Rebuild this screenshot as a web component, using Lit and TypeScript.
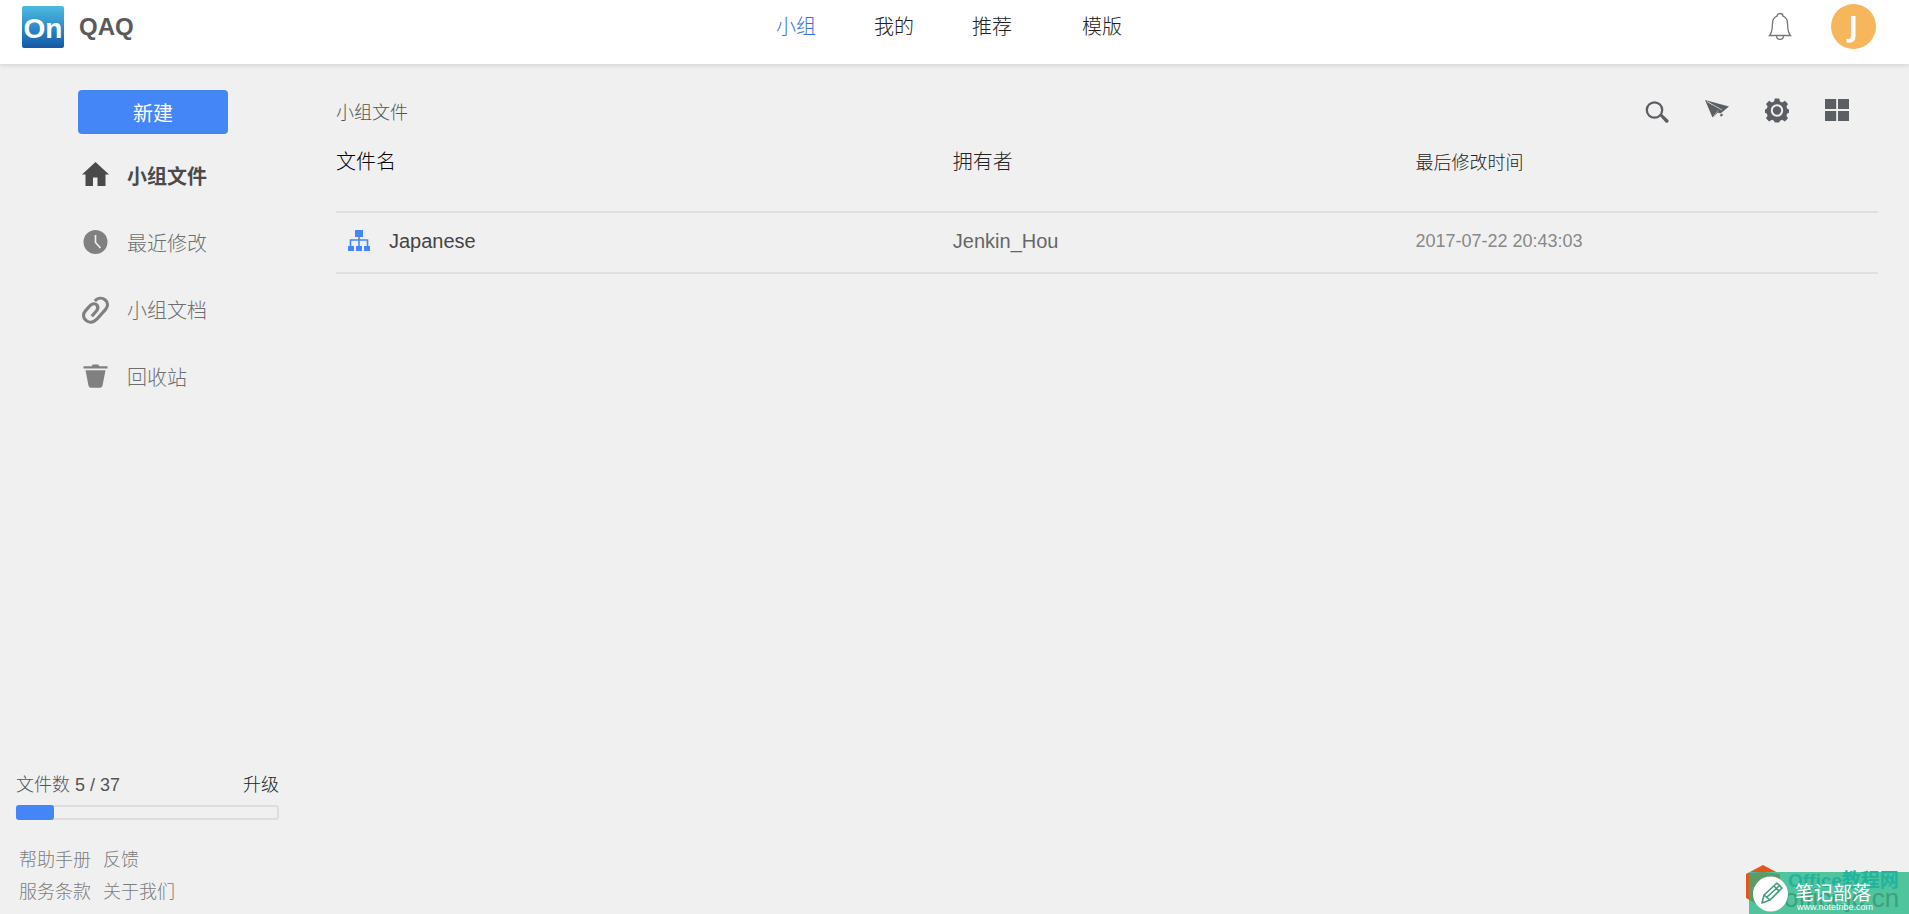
import { LitElement, html, css, svg, TemplateResult } from "lit";
import { customElement, property } from "lit/decorators.js";
import { classMap } from "lit/directives/class-map.js";

const sans = css`"Liberation Sans", "Noto Sans CJK SC", sans-serif`;

const icons: Record<string, TemplateResult> = {
  home: svg`<path d="M14.500 0 1 12.500h3.500V24H12v-8.500h4.500V24H24.500V12.500H28z"/>`,
  clock: svg`<circle cx="14.500" cy="13" r="12"/><path d="M14.500 6v7.500l5 5.500" fill="none" stroke="#f0f0f0" stroke-width="1.600"/>`,
  clip: svg`<path d="M13.800 5C16.500 2 20.800 1.200 24 3.800s3.200 6.400.6 9.600l-8.800 9.800c-3.300 3.500-7.800 3.800-10.800 1.200s-3.300-6.400-.4-9.800l4.800-5.300c2-2 5.200-2.200 6.800.2s.2 4.300-.8 5.500l-4.600 5.200" fill="none" stroke="currentColor" stroke-width="3.200"/>`,
  trash: svg`<path d="M2.500 3.300h8.200l1-1.800h5.600l1 1.800h8.200v2.200h-24zM4.500 7.300h20l-3 15.500q-.4 2-2.400 2H9.900q-2 0-2.400-2z"/>`,
  search: svg`<g transform="translate(0 1)"><circle cx="9.500" cy="10" r="7.700" fill="none" stroke="currentColor" stroke-width="2.300"/><path d="m14.500 15.500 2-2 6.800 6.600q.8 1-.2 2.200-1.200 1-2.400.2z"/></g>`,
  send: svg`<path d="M0 1 24 7.500 19.500 10 12.500 9zM0 1 13.500 10.500 7.500 18.500zM8 18.800 13.500 11 6 5.500 24 7.500 15.500 14.500 12.800 13.500zM14.800 16l2.400-1.600.8 1.600-2 1.800z"/><path d="M2 2.500 17 11" stroke="#f0f0f0" stroke-width=".7"/>`,
  gear: svg`<path fill-rule="evenodd" d="M9.800 0h4.400l.8 3 2.200.9 2.700-1.600 3.100 3.100-1.600 2.700.9 2.200 1.700.6v3.400l-1.700.6-.9 2.200 1.600 2.700-3.100 3.100-2.700-1.600-2.200.9-.8 1.800H9.800L9 22.200l-2.200-.9-2.700 1.600L1 19.800l1.600-2.700-.9-2.200-1.700-.6v-3.400l1.700-.6.9-2.200L1 5.400l3.100-3.100 2.700 1.600L9 3zM12 5.800a6.200 6.200 0 1 0 0 12.400 6.200 6.200 0 0 0 0-12.400z" transform="translate(0 -.5)"/><circle cx="12" cy="11.500" r="4.200"/>`,
  grid: svg`<path d="M0 0h11.200v10H0zM13 0h11v10H13zM0 12h11.200v10H0zM13 12h11v10H13z"/>`,
  bell: svg`<g fill="none" stroke="#777" stroke-width="1.300"><path d="M9 3.200c0-3.600 6-3.600 6 0 3.400 1.200 4.600 4.200 4.600 8 0 6 .6 8.500 2.900 11.300h-21c2.300-2.800 2.900-5.300 2.900-11.300 0-3.800 1.200-6.800 4.600-8z"/><path d="M8.500 22.500c0 5.200 7 5.200 7 0"/></g>`,
  tree: svg`<path d="M7 0h8v7H7zM0 16h6v5H0zM8 16h6v5H8zM16 16h6v5h-6z"/><path d="M11 6v10M2.500 16v-6h17v6" fill="none" stroke="currentColor" stroke-width="1.600"/>`,
};

@customElement("ui-icon")
class UiIcon extends LitElement {
  @property() name = "";
  @property() box = "0 0 24 24";
  static styles = css`
    :host { display: block; flex: none; }
    svg { display: block; width: 100%; height: 100%; fill: currentColor; overflow: visible; }
  `;
  render() {
    return html`<svg viewBox=${this.box} aria-hidden="true">${icons[this.name]}</svg>`;
  }
}

@customElement("top-bar")
class TopBar extends LitElement {
  static styles = css`
    :host { display: block; }
    header {
      display: grid; grid-template-columns: 1fr auto 1fr; align-items: center;
      box-sizing: border-box; height: 64px; padding: 4px 33px 15px 22px;
      background: #fff; box-shadow: 0 1px 5px rgba(0, 0, 0, .14);
      font-family: ${sans}; position: relative;
    }
    .brand { display: flex; align-items: center; gap: 15px; color: #5a5a5a; text-decoration: none; font-weight: 700; font-size: 24px; line-height: 28px; }
    .logo { display: block; width: 42px; height: 42px; }
    .logo text { font: 700 28px "Liberation Sans", sans-serif; fill: #fff; }
    nav { display: flex; gap: 58px; font-size: 20px; line-height: 30px; }
    nav a { color: #222; text-decoration: none; font-weight: 300; }
    nav a.on { color: #3a72dc; }
    nav a.spaced { margin-right: 12px; }
    .user { display: flex; justify-content: flex-end; align-items: center; gap: 39px; }
    button { border: 0; padding: 0; background: none; cursor: pointer; }
    .bell { width: 24px; height: 28px; }
    .avatar { width: 45px; height: 45px; border-radius: 50%; background: #f6b65c; color: #fff; font: 700 28px/45px "Open Sans", sans-serif; }
  `;
  render() {
    return html`<header>
      <a class="brand" href="#">
        <svg class="logo" viewBox="0 0 42 42" role="img" aria-label="On">
          <defs><linearGradient id="g" x2="0" y2="1">
            <stop offset="0" stop-color="#4dbbe0"/><stop offset=".5" stop-color="#2d8ccb"/><stop offset="1" stop-color="#1557a4"/>
          </linearGradient></defs>
          <rect width="42" height="42" rx="2" fill="url(#g)"/>
          <text x="21" y="32" text-anchor="middle">On</text>
        </svg>
        <span>QAQ</span>
      </a>
      <nav>
        ${["小组", "我的", "推荐", "模版"].map((t, i) => html`<a href="#" class=${classMap({ on: i === 0, spaced: i === 2 })}>${t}</a>`)}
      </nav>
      <div class="user">
        <button aria-label="通知"><ui-icon class="bell" name="bell" box="0 0 24 28"></ui-icon></button>
        <button class="avatar">J</button>
      </div>
    </header>`;
  }
}

@customElement("side-bar")
class SideBar extends LitElement {
  @property({ type: Number }) used = 5;
  @property({ type: Number }) total = 37;
  static styles = css`
    :host { display: flex; flex-direction: column; justify-content: space-between; font-family: ${sans}; font-weight: 300; }
    .top { padding: 26px 0 0 78px; }
    .new { display: block; width: 150px; height: 44px; border: 0; border-radius: 4px; margin-bottom: 8px; background: #4486f8; color: #fff; font: inherit; font-weight: 400; font-size: 20px; cursor: pointer; }
    .item { display: flex; align-items: center; gap: 18px; height: 67px; padding-left: 3px; color: #808080; font-size: 20px; text-decoration: none; }
    .item span { color: #6e6e6e; }
    .item.on, .item.on span { color: #4a4a4a; font-weight: 700; }
    .item ui-icon { width: 28px; height: 28px; }
    .bottom { padding: 0 57px 6px 16px; }
    .quota { display: flex; justify-content: space-between; font-size: 18px; line-height: 30px; color: #555; }
    .quota a { color: #222; text-decoration: none; }
    .track { box-sizing: border-box; height: 15px; margin: 5px 0 24px; border-radius: 3px; box-shadow: inset 0 0 0 2px #ddd; }
    .fill { height: 15px; border-radius: 3px; background: #4486f8; border-right: 2px solid #4486f8; }
    .links { display: grid; grid-template-columns: max-content max-content; column-gap: 12px; padding-left: 3px; font-size: 18px; line-height: 32px; }
    .links a { color: #7c7c7c; text-decoration: none; }
  `;
  render() {
    const items = [["home", "小组文件"], ["clock", "最近修改"], ["clip", "小组文档"], ["trash", "回收站"]];
    return html`
      <div class="top">
        <button class="new">新建</button>
        <nav>${items.map(([icon, label], i) => html`<a href="#" class=${classMap({ item: true, on: i === 0 })}>
          <ui-icon name=${icon} box="0 0 28 28"></ui-icon><span>${label}</span></a>`)}</nav>
      </div>
      <div class="bottom">
        <div class="quota"><span>文件数 ${this.used} / ${this.total}</span><a href="#">升级</a></div>
        <div class="track" role="progressbar" aria-label="文件数" aria-valuenow=${this.used} aria-valuemax=${this.total}>
          <div class="fill" style="width:${(this.used / this.total) * 100}%"></div>
        </div>
        <div class="links">${["帮助手册", "反馈", "服务条款", "关于我们"].map((t) => html`<a href="#">${t}</a>`)}</div>
      </div>`;
  }
}

@customElement("file-list")
class FileList extends LitElement {
  static styles = css`
    :host { display: block; padding: 25px 31px 0 0; font-family: ${sans}; font-weight: 300; }
    .bar { display: flex; justify-content: space-between; align-items: center; height: 44px; padding-right: 29px; font-size: 18px; color: #555; }
    .tools { display: flex; gap: 36px; }
    .tools button { border: 0; padding: 0; background: none; color: #5b5e62; cursor: pointer; }
    .tools ui-icon { width: 24px; height: 24px; }
    table { width: 100%; border-collapse: collapse; table-layout: fixed; }
    th, td { padding: 0 0 3px; text-align: left; font-weight: 300; vertical-align: middle; box-sizing: border-box; }
    .owner, .time { width: 30%; }
    th { height: 79px; padding-bottom: 23px; font-size: 20px; color: #222; }
    th.name { color: #000; }
    th.time { font-size: 18px; }
    td { height: 61px; font-size: 20px; color: #666; }
    td.time { font-size: 18px; color: #888; }
    tr { border-bottom: 2px solid #dedfe2; }
    .file { display: flex; align-items: center; gap: 19px; padding-left: 12px; color: #444; text-decoration: none; }
    .file ui-icon { width: 22px; height: 22px; color: #4486f8; }
  `;
  render() {
    const tools = [["search", "搜索"], ["send", "发送"], ["gear", "设置"], ["grid", "网格视图"]];
    return html`
      <div class="bar"><span>小组文件</span>
        <div class="tools">${tools.map(([n, l]) => html`<button aria-label=${l}><ui-icon name=${n}></ui-icon></button>`)}</div>
      </div>
      <table>
        <thead><tr><th class="name">文件名</th><th class="owner">拥有者</th><th class="time">最后修改时间</th></tr></thead>
        <tbody><tr>
          <td><a class="file" href="#"><ui-icon name="tree" box="0 0 22 22"></ui-icon><span>Japanese</span></a></td>
          <td class="owner">Jenkin_Hou</td>
          <td class="time">2017-07-22 20:43:03</td>
        </tr></tbody>
      </table>`;
  }
}

@customElement("site-mark")
class SiteMark extends LitElement {
  static styles = css`
    :host { display: block; width: 163px; height: 50px; }
    svg { display: block; }
    text { font-family: ${sans}; }
    .brand { font-size: 19px; font-weight: 700; fill: #20b49f; }
    .host { font-size: 26px; fill: #3d9f80; }
    .title { font-size: 19px; font-weight: 400; fill: #fff; }
    .url { font-size: 9px; fill: #fff; }
  `;
  render() {
    return html`<svg width="163" height="50" viewBox="0 0 163 50">
      <path d="M0 10 17 1l17 9v24l-17 9-17-9z" fill="#e2571c"/>
      <path d="M3 8h160v42H3z" fill="#50c49d"/>
      <path d="M3 9 17 8l17 2v24l-17 9-14-7z" fill="#5a9b67"/>
      <text class="brand" x="42" y="23">Office教程网</text>
      <text class="host" x="38" y="43">officejc.cn</text>
      <circle cx="24.500" cy="30" r="17.500" fill="#fff"/>
      <g fill="none" stroke="#3f9f79" stroke-width="1.600" stroke-linejoin="round">
        <path d="m16 39 2-8 13-12 5 5-12 12zM18 31l6 5M21 33l12-11M28 22l5 5"/>
      </g>
      <text class="title" x="49" y="36">笔记部落</text>
      <text class="url" x="51" y="46">www.notetribe.com</text>
    </svg>`;
  }
}

@customElement("app-root")
class AppRoot extends LitElement {
  static styles = css`
    :host { display: flex; flex-direction: column; min-height: 100vh; background: #f0f0f0; position: relative; }
    .body { flex: 1; display: grid; grid-template-columns: 336px minmax(0, 1fr); }
    site-mark { position: absolute; right: 0; bottom: 0; }
  `;
  render() {
    return html`<top-bar></top-bar>
      <div class="body"><side-bar></side-bar><file-list></file-list></div>
      <site-mark></site-mark>`;
  }
}
